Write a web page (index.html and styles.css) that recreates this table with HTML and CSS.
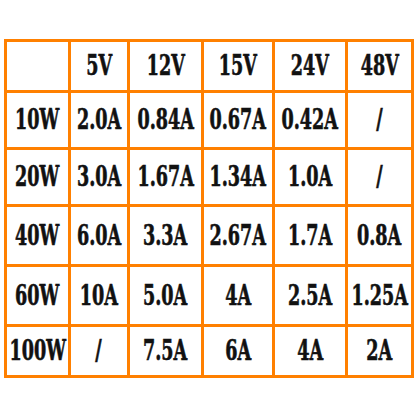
FILE: index.html
```html
<!DOCTYPE html>
<html>
<head>
<meta charset="utf-8">
<link rel="stylesheet" href="styles.css">
</head>
<body>
<div class="table">
  <div class="cell"></div>
  <div class="cell"><span>5V</span></div>
  <div class="cell"><span>12V</span></div>
  <div class="cell"><span>15V</span></div>
  <div class="cell"><span>24V</span></div>
  <div class="cell"><span>48V</span></div>

  <div class="cell"><span>10W</span></div>
  <div class="cell"><span>2.0A</span></div>
  <div class="cell"><span>0.84A</span></div>
  <div class="cell"><span>0.67A</span></div>
  <div class="cell"><span>0.42A</span></div>
  <div class="cell"><span>/</span></div>

  <div class="cell"><span>20W</span></div>
  <div class="cell"><span>3.0A</span></div>
  <div class="cell"><span>1.67A</span></div>
  <div class="cell"><span>1.34A</span></div>
  <div class="cell"><span>1.0A</span></div>
  <div class="cell"><span>/</span></div>

  <div class="cell"><span>40W</span></div>
  <div class="cell"><span>6.0A</span></div>
  <div class="cell"><span>3.3A</span></div>
  <div class="cell"><span>2.67A</span></div>
  <div class="cell"><span>1.7A</span></div>
  <div class="cell"><span>0.8A</span></div>

  <div class="cell"><span>60W</span></div>
  <div class="cell"><span>10A</span></div>
  <div class="cell"><span>5.0A</span></div>
  <div class="cell"><span>4A</span></div>
  <div class="cell"><span>2.5A</span></div>
  <div class="cell"><span>1.25A</span></div>

  <div class="cell"><span>100W</span></div>
  <div class="cell"><span>/</span></div>
  <div class="cell"><span>7.5A</span></div>
  <div class="cell"><span>6A</span></div>
  <div class="cell"><span>4A</span></div>
  <div class="cell"><span>2A</span></div>
</div>
</body>
</html>
```

FILE: styles.css
```css
html, body {
  margin: 0;
  padding: 0;
  background: #ffffff;
}
body {
  width: 416px;
  height: 416px;
  overflow: hidden;
}
.table {
  margin: 39px 0 0 4px;
  display: grid;
  grid-template-columns: 61px 56px 71px 68px 70px 63px;
  grid-template-rows: 48px 54px 54px 57px 57px 48px;
  gap: 3px;
  padding: 3px;
  background: #ff8000;
  width: max-content;
}
.cell {
  background: #ffffff;
  display: flex;
  align-items: center;
  justify-content: center;
  overflow: visible;
}
.cell span {
  display: inline-block;
  font-family: "DejaVu Serif", "Liberation Serif", serif;
  font-stretch: condensed;
  font-weight: bold;
  font-size: 27.5px;
  line-height: 1;
  color: #111111;
  white-space: nowrap;
  -webkit-text-stroke: 0.6px #111111;
  transform: scaleX(0.71);
}
```
